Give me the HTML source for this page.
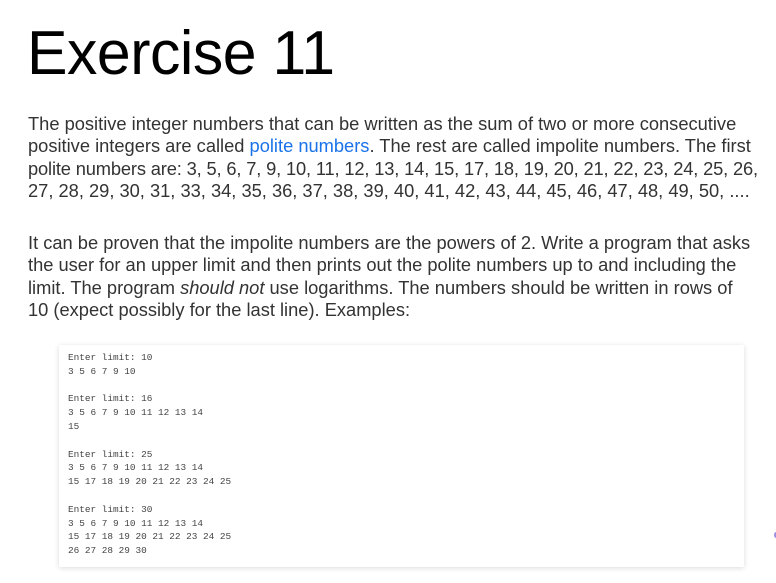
<!DOCTYPE html>
<html><head><meta charset="utf-8"><style>
html,body{margin:0;padding:0;background:#fff;width:776px;height:583px;overflow:hidden}
body{font-family:"Liberation Sans",sans-serif;color:#2b2b2b}
h1{position:absolute;left:27px;top:14px;margin:0;font-weight:normal;font-size:62px;line-height:80px;color:#000;letter-spacing:-0.5px;transform:scaleX(0.98);transform-origin:left}
.p{position:absolute;left:28px;font-size:18.3px;line-height:22.3px;white-space:nowrap;color:#333}
a{color:#1a73e8;text-decoration:none}
.code{position:absolute;left:59px;top:345px;width:685px;height:222px;background:#fff;box-shadow:0 1px 5px rgba(0,0,0,0.15)}
pre{position:absolute;left:9px;top:6px;margin:0;font-family:"Liberation Mono",monospace;font-size:9.4px;line-height:13.8px;color:#444}
.dot{position:absolute;left:774px;top:532px;width:4px;height:6px;border-radius:50%;background:#9a8fe0}
</style></head><body>
<h1>Exercise 11</h1>
<div class="p" style="top:113px">The positive integer numbers that can be written as the sum of two or more consecutive<br>positive integers are called <a>polite numbers</a>. The rest are called impolite numbers. The first<br><span style="letter-spacing:-0.15px">polite numbers are: 3, 5, 6, 7, 9, 10, 11, 12, 13, 14, 15, 17, 18, 19, 20, 21, 22, 23, 24, 25, 26,</span><br>27, 28, 29, 30, 31, 33, 34, 35, 36, 37, 38, 39, 40, 41, 42, 43, 44, 45, 46, 47, 48, 49, 50, ....</div>
<div class="p" style="top:232px">It can be proven that the impolite numbers are the powers of 2. Write a program that asks<br>the user for an upper limit and then prints out the polite numbers up to and including the<br>limit. The program <i>should not</i> use logarithms. The numbers should be written in rows of<br>10 (expect possibly for the last line). Examples:</div>
<div class="code"><pre>Enter limit: 10
3 5 6 7 9 10

Enter limit: 16
3 5 6 7 9 10 11 12 13 14
15

Enter limit: 25
3 5 6 7 9 10 11 12 13 14
15 17 18 19 20 21 22 23 24 25

Enter limit: 30
3 5 6 7 9 10 11 12 13 14
15 17 18 19 20 21 22 23 24 25
26 27 28 29 30</pre></div>
<div class="dot"></div>
</body></html>
